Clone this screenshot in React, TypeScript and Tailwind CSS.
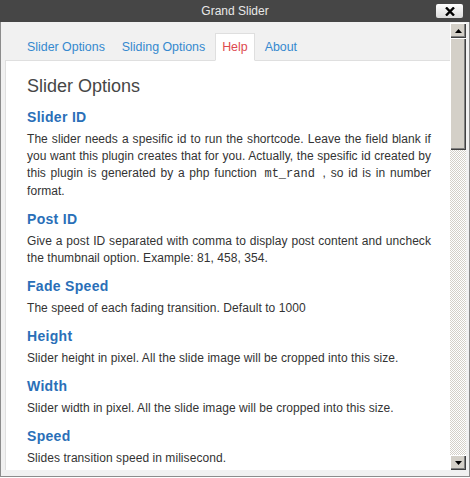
import React from 'react';

type Section = {
  title: string;
  body: React.ReactNode;
};

const sections: Section[] = [
  {
    title: 'Slider ID',
    body: (
      <>
        The slider needs a spesific id to run the shortcode. Leave the field blank if you want this plugin creates
        that for you. Actually, the spesific id created by this plugin is generated by a php function{' '}
        <code className="px-[3px] font-['Liberation_Mono','Courier_New',monospace] text-[12px] tracking-normal">mt_rand</code> , so id
        is in number format.
      </>
    ),
  },
  {
    title: 'Post ID',
    body: 'Give a post ID separated with comma to display post content and uncheck the thumbnail option. Example: 81, 458, 354.',
  },
  { title: 'Fade Speed', body: 'The speed of each fading transition. Default to 1000' },
  { title: 'Height', body: 'Slider height in pixel. All the slide image will be cropped into this size.' },
  { title: 'Width', body: 'Slider width in pixel. All the slide image will be cropped into this size.' },
  { title: 'Speed', body: 'Slides transition speed in milisecond.' },
];

const tabs = ['Slider Options', 'Sliding Options', 'Help', 'About'];

// classic 3d button look for the scrollbar parts
const bevel =
  'bg-[#d4d0c8] shadow-[inset_1px_1px_0_#ffffff,inset_-1px_-1px_0_#404040,inset_-2px_-2px_0_#808080]';

function Arrow({ up }: { up?: boolean }) {
  return (
    <svg width="7" height="4" viewBox="0 0 7 4">
      <path d={up ? 'M3.5 0L7 4H0z' : 'M0 0h7L3.5 4z'} fill="#000" />
    </svg>
  );
}

export default function App() {
  return (
    <div className="w-[470px] h-[478px] bg-white font-['Liberation_Sans',Arial,sans-serif]">
      {/* title bar */}
      <div className="relative h-[22px] bg-[#464646] flex items-center justify-center">
        <span className="text-[12px] text-[#e8e8e8]">Grand Slider</span>
        <div className="absolute left-[436px] top-[4px] w-[27px] h-[14px] rounded-[2px] bg-gradient-to-b from-white to-[#dcdcdc] flex items-center justify-center">
          <svg width="10" height="9" viewBox="0 0 10 9">
            <path d="M1 0.5l8 8M9 0.5l-8 8" stroke="#000" strokeWidth="2.4" />
          </svg>
        </div>
      </div>

      {/* window body */}
      <div className="h-[455px] bg-[#f1f1f1] border-l border-r border-b border-[#8c8c8c] flex pt-px pb-[6px] pr-[3px]">
        <div className="flex-1 overflow-hidden flex flex-col">
          {/* tabs */}
          <div className="flex pl-[19px] pt-[10px] gap-[3px] text-[12.4px] leading-[16px]">
            {tabs.map(tab => (
              <div
                key={tab}
                className={
                  tab === 'Help'
                    ? 'relative z-10 -mb-px px-[6px] pt-[5px] pb-[5px] border border-[#dfdfdf] border-b-white bg-white text-[#dd4a4f]'
                    : 'px-[6px] pt-[5px] pb-[5px] border border-transparent -mb-px text-[#3589cf]'
                }
              >
                {tab}
              </div>
            ))}
          </div>

          {/* help panel */}
          <div className="flex-1 ml-[4px] bg-white border-t border-l border-[#dfdfdf] pl-[21px] pt-[13px]">
            <h2 className="text-[18px] leading-[24px] text-[#464646]">Slider Options</h2>
            <div className="mt-[3px]">
              {sections.map(s => (
                <div key={s.title} className="mt-[9px]">
                  <h3 className="text-[14px] leading-[20px] font-bold text-[#2a6fb8] tracking-[0.3px]">{s.title}</h3>
                  <p className="mt-[4px] w-[404px] text-justify text-[12px] leading-[17px] tracking-[0.06px] text-[#333]">
                    {s.body}
                  </p>
                </div>
              ))}
            </div>
          </div>
        </div>

        {/* scrollbar */}
        <div className="w-[16px] flex flex-col bg-[repeating-conic-gradient(#d4d0c8_0%_25%,#ffffff_0%_50%)] bg-[length:2px_2px]">
          <div className={`h-[15px] flex items-center justify-center ${bevel}`}>
            <Arrow up />
          </div>
          <div className={`h-[112px] ${bevel}`} />
          <div className="flex-1" />
          <div className={`h-[15px] flex items-center justify-center ${bevel}`}>
            <Arrow />
          </div>
        </div>
      </div>
    </div>
  );
}
